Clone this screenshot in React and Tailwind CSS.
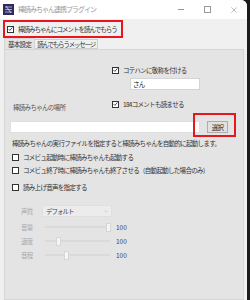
import React from 'react';

const font = { fontFamily: '"Noto Sans CJK JP", "Noto Sans", sans-serif' };
const txt = 'text-[6.5px] tracking-[-0.7px] leading-none whitespace-nowrap';

function Check({ checked, label, className = '', textClass = '' }) {
  return (
    <div className={`flex items-center h-[8px] ${className}`}>
      <div className="w-[7px] h-[7px] border border-[#333] bg-white flex items-center justify-center shrink-0">
        {checked && (
          <svg viewBox="0 0 8 8" className="w-[6px] h-[6px]">
            <path d="M1 4.2 L3 6.2 L7 1.5" fill="none" stroke="#222" strokeWidth="1.3" />
          </svg>
        )}
      </div>
      <span className={`ml-[4px] ${txt} text-[#333] ${textClass}`}>{label}</span>
    </div>
  );
}

function Slider({ label, pos }) {
  return (
    <div className="flex items-center h-[14px]">
      <span className={`ml-[16px] w-[24px] ${txt} text-[#aaa]`}>{label}</span>
      <div className="relative w-[65px] h-[9px] flex items-center">
        <div className="w-full h-[2px] bg-[#dadada]" />
        <div className="absolute top-0 w-[5px] h-[9px] bg-[#f5f5f5] border border-[#d6d6d6]" style={{ left: pos }} />
      </div>
      <span className="ml-[6px] text-[6.5px] leading-none text-[#444]">100</span>
    </div>
  );
}

export default function App() {
  return (
    <div className="w-[250px] h-[300px] bg-[#1c1c1c] overflow-hidden" style={font}>
      <div className="w-[247px] h-[300px] bg-[#f0f0f0] rounded-tr-[6px] overflow-hidden flex flex-col">
        {/* Title bar */}
        <div className="h-[19px] bg-white flex items-center shrink-0">
          <div className="ml-[3px] w-[11px] h-[11px] bg-[#2d2a5c]">
            <svg viewBox="0 0 11 11" className="w-[11px] h-[11px]">
              <path d="M2 3 L9 3 M2 5.5 L9 5.5 M2 8 L9 8" stroke="#c8c4f0" strokeWidth="0.8" />
              <path d="M3 2 L8 9" stroke="#e0dcff" strokeWidth="0.8" />
            </svg>
          </div>
          <span className="ml-[4px] text-[7px] tracking-[-1px] leading-none text-[#9a9a9a]">棒読みちゃん連携プラグイン</span>
          <div className="ml-auto flex items-center">
            <div className="w-[6px] h-px bg-[#999] mr-[20px]" />
            <div className="w-[7px] h-[7px] border border-[#999] mr-[20px]" />
            <svg viewBox="0 0 8 8" className="w-[6px] h-[6px] mr-[10px]">
              <path d="M0.5 0.5 L7.5 7.5 M7.5 0.5 L0.5 7.5" stroke="#999" strokeWidth="0.9" />
            </svg>
          </div>
        </div>

        {/* Main toggle */}
        <div className="mt-[1px] ml-[3px] w-[120px] h-[18px] border-2 border-[#e8161f] flex items-center pl-[2px]">
          <Check checked label="棒読みちゃんにコメントを読んでもらう" textClass="tracking-[-1px]" />
        </div>

        {/* Tabs */}
        <div className="mt-[1px] ml-[4px] flex items-end h-[10px] relative z-10">
          <div className={`h-[11px] px-[3px] bg-[#e4e4e4] border border-b-0 border-[#d4d4d4] flex items-center ${txt} tracking-[-0.2px] text-[#333]`}>基本設定</div>
          <div className={`h-[10px] px-[2px] bg-[#f0f0f0] border border-l-0 border-[#cfcfcf] flex items-center ${txt} tracking-[-1.2px] text-[#333]`}>読んでもらうメッセージ</div>
        </div>

        {/* Panel */}
        <div className="ml-[4px] w-[240px] flex-1 bg-[#e4e4e4] border border-[#d6d6d6] relative">
          <Check className="ml-[107px] mt-[16px]" checked label="コテハンに敬称を付ける" />
          <div className={`ml-[125px] mt-[4px] w-[70px] h-[12px] bg-white border border-[#d4d4d4] flex items-center pl-[2px] ${txt} text-[#222]`}>さん</div>

          <div className="flex items-start mt-[10px] h-[12px]">
            <span className={`ml-[8px] w-[99px] mt-[4px] ${txt} text-[#555]`}>棒読みちゃんの場所</span>
            <Check checked label="184コメントも読ませる" />
          </div>

          <div className="flex items-center mt-[9px] h-[12px]">
            <div className="ml-[5px] w-[190px] h-[12px] bg-white border border-[#e0e0e0]" />
            <div className={`ml-[7px] w-[21px] h-[12px] bg-[#e1e1e1] border border-[#adadad] flex items-center justify-center ${txt} tracking-[-0.3px] text-[#222]`}>選択</div>
          </div>
          <div className="absolute left-[188px] top-[63px] w-[43px] h-[24px] border-2 border-[#e8161f]" />

          <div className={`ml-[7px] mt-[6px] h-[8px] flex items-center ${txt} text-[#333]`}>棒読みちゃんの実行ファイルを指定すると棒読みちゃんを自動的に起動します。</div>

          <Check className="ml-[7px] mt-[6px]" label="コメビュ起動時に棒読みちゃんも起動する" />
          <Check className="ml-[7px] mt-[5px]" label="コメビュ終了時に棒読みちゃんも終了させる（自動起動した場合のみ）" />
          <Check className="ml-[7px] mt-[9px]" label="読み上げ音声を指定する" />

          <div className="flex items-center mt-[14px] h-[12px]">
            <span className={`ml-[16px] w-[21px] ${txt} text-[#aaa]`}>声質</span>
            <div className="w-[70px] h-[12px] bg-[#ececec] border border-[#e0e0e0] flex items-center px-[3px]">
              <span className={`${txt} tracking-[-1px] text-[#444]`}>デフォルト</span>
              <svg viewBox="0 0 6 4" className="ml-auto w-[4px] h-[3px]">
                <path d="M0.5 0.5 L3 3 L5.5 0.5" fill="none" stroke="#bbb" strokeWidth="0.8" />
              </svg>
            </div>
          </div>
          <div className="mt-[3px]">
            <Slider label="音量" pos="61px" />
          </div>
          <Slider label="速度" pos="11px" />
          <Slider label="音程" pos="19px" />
        </div>
      </div>
    </div>
  );
}
